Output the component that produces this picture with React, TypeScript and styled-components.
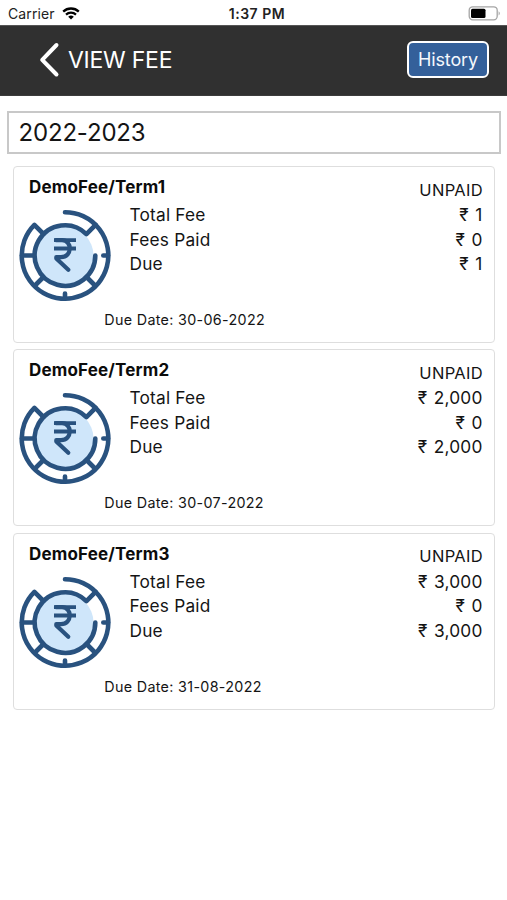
import React from 'react';
import styled, { createGlobalStyle } from 'styled-components';

const GlobalStyle = createGlobalStyle`
  * { box-sizing: border-box; }
  body {
    margin: 0;
    background: #fff;
    color: #141414;
    font-family: Inter, "Noto Sans", sans-serif;
  }
`;

const Screen = styled.div`
  display: flex;
  flex-direction: column;
  min-height: 900px;
`;

const StatusBar = styled.div`
  display: grid;
  grid-template-columns: 1fr auto 1fr;
  align-items: center;
  height: 25px;
  padding: 2px 6px 0 8px;
  color: #222;
`;

const Carrier = styled.div`
  display: flex;
  align-items: center;
  gap: 7px;
  font-size: 14px;
  letter-spacing: 0.1px;
`;

const Clock = styled.div`
  padding-left: 7px;
  font-size: 14px;
  font-weight: 600;
  letter-spacing: 0.5px;
  transform: translateX(-1px);
`;

const BatterySlot = styled.div`
  display: flex;
  justify-content: flex-end;
`;

const Header = styled.header`
  display: flex;
  align-items: center;
  justify-content: space-between;
  height: 71px;
  padding: 0 18px 2px 38px;
  background: #303030;
  border-top: 1px solid #555;
  border-bottom: 1px solid #3c3c3c;
`;

const BackLink = styled.div`
  display: flex;
  align-items: center;
  gap: 8px;
  color: #fff;
`;

const PageTitle = styled.h1`
  margin: 0;
  font-size: 23px;
  font-weight: 400;
  line-height: 28px;
  letter-spacing: -0.25px;
`;

const HistoryButton = styled.button`
  width: 82px;
  height: 37px;
  padding: 0;
  border: 2px solid #fff;
  border-radius: 6px;
  background: #34609a;
  color: #f4f8fd;
  font: 400 18px Inter, sans-serif;
  letter-spacing: -0.12px;
`;

const YearField = styled.div`
  display: flex;
  align-items: center;
  height: 43px;
  margin: 15px 6px 0 7px;
  padding: 0 11px 0 9.5px;
  border: 2px solid #c8c8c8;
  font-size: 24px;
  letter-spacing: -0.17px;
`;

const FeeList = styled.main`
  display: flex;
  flex-direction: column;
  gap: 6.3px;
  margin: 12px 12px 0 13px;
`;

const Card = styled.section`
  display: grid;
  grid-template-columns: 92px 1fr auto;
  grid-template-rows: 42px 93px 1fr;
  height: 177px;
  padding: 0 11.5px 0 5px;
  border: 1.5px solid #dedede;
  border-radius: 4px;
`;

const CardTitle = styled.h2`
  grid-column: 1 / 3;
  margin: 0;
  padding: 8px 0 0 10px;
  font-size: 17px;
  font-weight: 700;
  line-height: 24px;
  letter-spacing: 0.17px;
  color: #0b0b0b;
`;

const Status = styled.div`
  padding-top: 10.5px;
  font-size: 16.5px;
  line-height: 24px;
  letter-spacing: 0.3px;
  text-align: right;
  margin-right: -0.4px;
`;

const Lines = styled.div<{ $end?: boolean }>`
  display: flex;
  flex-direction: column;
  margin-top: -6px;
  padding-left: ${(p) => (p.$end ? 0 : 18.5)}px;
  text-align: ${(p) => (p.$end ? 'right' : 'left')};
  font-size: 17.3px;
  line-height: 24.5px;
  letter-spacing: 0.2px;
  word-spacing: ${(p) => (p.$end ? 1.3 : 0)}px;
`;

const DueDate = styled.div`
  grid-column: 1 / -1;
  padding: 7px 0 0 85.3px;
  font-size: 14.3px;
  line-height: 21px;
  letter-spacing: 0.33px;
`;

const CoinDrawing = styled.svg`
  display: block;
  width: 92px;
  height: 93px;
`;

function WifiIcon() {
  return (
    <svg width="18" height="13" viewBox="0 0 18 13" fill="none" stroke="#000">
      <path d="M1.2 4.6a11.3 11.3 0 0 1 15.6 0" strokeWidth="2.3" />
      <path d="M4 7.6a7.3 7.3 0 0 1 10 0" strokeWidth="2.2" />
      <path d="M9 12.5 6.2 9.8a4.1 4.1 0 0 1 5.6 0Z" fill="#000" stroke="none" />
    </svg>
  );
}

function BatteryIcon() {
  return (
    <svg width="33" height="15" viewBox="0 0 33 15">
      <rect x="1.2" y=".8" width="28" height="13" rx="3.5" fill="#fff" stroke="#a5a5a5" strokeWidth="1.3" />
      <rect x="3" y="2.7" width="14.5" height="9.2" rx="1.5" fill="#000" />
      <path d="M30.6 5.2q2.4 2.1 0 4.2Z" fill="#a5a5a5" />
    </svg>
  );
}

function BackIcon() {
  return (
    <svg width="22" height="36" viewBox="0 0 22 36" fill="none" stroke="#fff" strokeWidth="4" strokeLinecap="round" strokeLinejoin="round">
      <path d="M18.5 3 4.2 17.8 18.5 32.5" />
    </svg>
  );
}

function RupeeCoin() {
  return (
    <CoinDrawing viewBox="-46 -46.5 92 93" fill="none" stroke="#29527f" strokeWidth="4.6" strokeLinecap="round" strokeLinejoin="round">
      <circle cx="-.5" cy="0" r="29" fill="#cfe6fa" stroke="none" />
      <path d="M0-43.3A43.3 43.3 0 1 1-30.6-30.6L-21.5-21.5" />
      <path d="M30.3 0A30.3 30.3 0 1 1 21.4-21.4L30.6-30.6" />
      <path d="M-43 0H-31M-30 30-22 22M30 30 22 22M43 0H38.3M0 43V38" />
      <path d="M-11-15.3H11M-11-7H11" strokeWidth="3.8" strokeLinecap="butt" />
      <path d="M-9-15.3H-3C7.5-15.3 7.5 1.6-4 1.6H-8.7V3L3.3 14.3" strokeWidth="4.2" />
    </CoinDrawing>
  );
}

interface Fee {
  title: string;
  total: string;
  paid: string;
  due: string;
  date: string;
}

const fees: Fee[] = [
  { title: 'DemoFee/Term1', total: '₹ 1', paid: '₹ 0', due: '₹ 1', date: '30-06-2022' },
  { title: 'DemoFee/Term2', total: '₹ 2,000', paid: '₹ 0', due: '₹ 2,000', date: '30-07-2022' },
  { title: 'DemoFee/Term3', total: '₹ 3,000', paid: '₹ 0', due: '₹ 3,000', date: '31-08-2022' },
];

function FeeCard({ fee }: { fee: Fee }) {
  return (
    <Card>
      <CardTitle>{fee.title}</CardTitle>
      <Status>UNPAID</Status>
      <RupeeCoin />
      <Lines>
        <span>Total Fee</span>
        <span>Fees Paid</span>
        <span>Due</span>
      </Lines>
      <Lines $end>
        <span>{fee.total}</span>
        <span>{fee.paid}</span>
        <span>{fee.due}</span>
      </Lines>
      <DueDate>Due Date: {fee.date}</DueDate>
    </Card>
  );
}

export default function App() {
  return (
    <Screen>
      <GlobalStyle />
      <StatusBar>
        <Carrier>
          Carrier
          <WifiIcon />
        </Carrier>
        <Clock>1:37 PM</Clock>
        <BatterySlot>
          <BatteryIcon />
        </BatterySlot>
      </StatusBar>
      <Header>
        <BackLink>
          <BackIcon />
          <PageTitle>VIEW FEE</PageTitle>
        </BackLink>
        <HistoryButton>History</HistoryButton>
      </Header>
      <YearField>2022-2023</YearField>
      <FeeList>
        {fees.map((fee) => (
          <FeeCard key={fee.title} fee={fee} />
        ))}
      </FeeList>
    </Screen>
  );
}
